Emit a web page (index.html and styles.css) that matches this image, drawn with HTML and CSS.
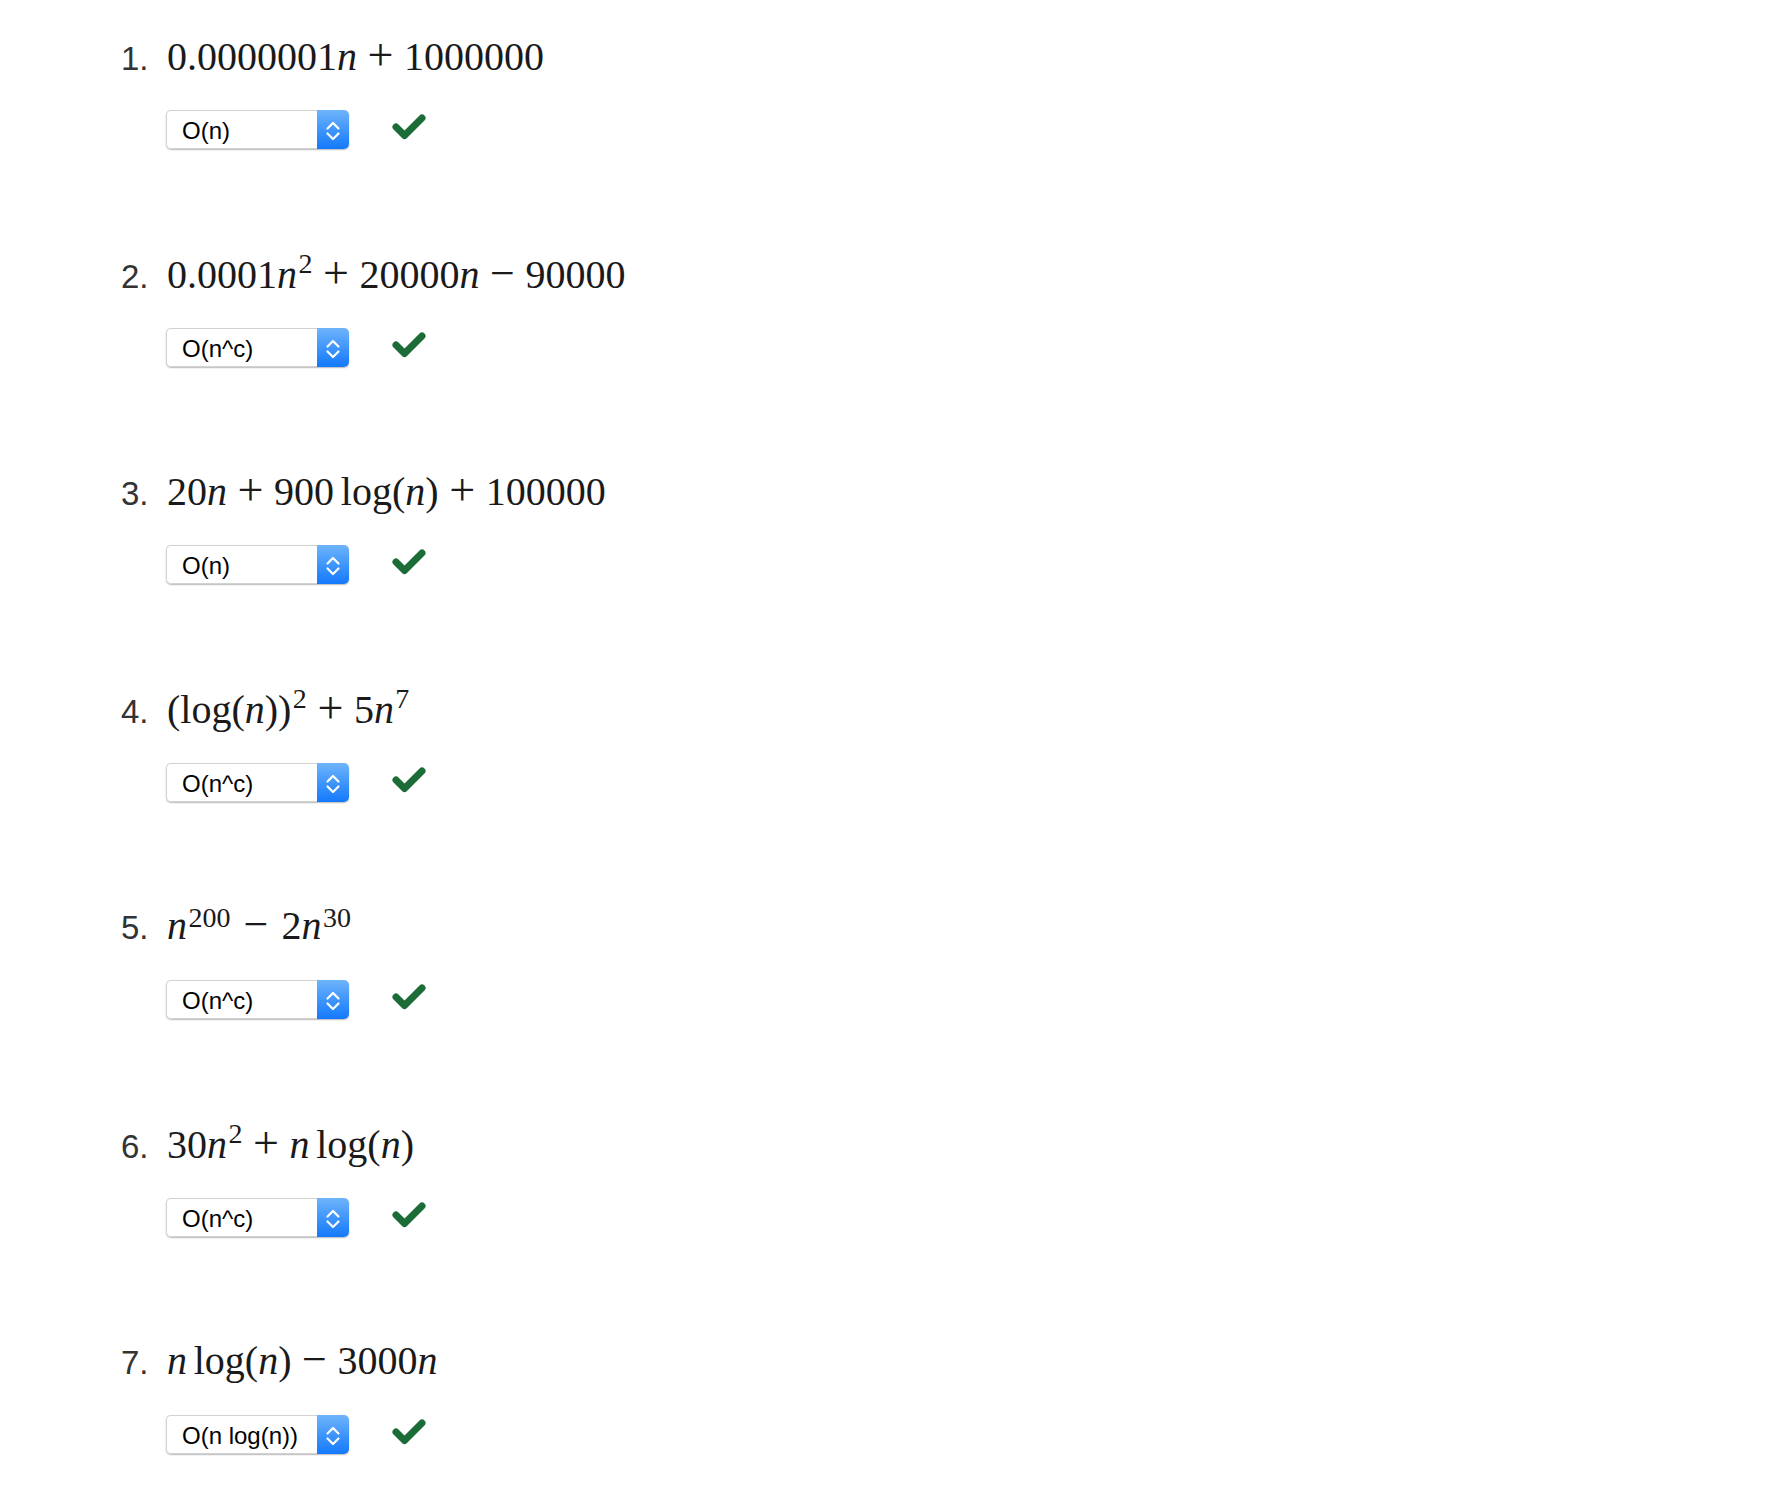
FILE: index.html
```html
<!DOCTYPE html>
<html lang="en">
<head>
<meta charset="utf-8">
<title>Asymptotic complexity quiz</title>
<link rel="stylesheet" href="styles.css">
</head>
<body>
<ol class="quiz">
  <li class="item">
    <div class="head"><span class="num">1.</span><span class="expr">0.0000001<i>n</i><span class="op">+</span>1000000</span></div>
    <div class="answer">
      <div class="select"><span class="value">O(n)</span><span class="arrows"><svg width="32" height="39" viewBox="0 0 32 39"><path d="M10.5 18.5 L16 13 L21.5 18.5 M10.5 23.5 L16 29 L21.5 23.5" fill="none" stroke="#fff" stroke-width="2.2" stroke-linecap="round" stroke-linejoin="round"/></svg></span></div>
      <svg class="check" width="34" height="26" viewBox="0 0 34 26"><path d="M4 13 L12.5 21.5 L30 4" fill="none" stroke="#1c6c38" stroke-width="7" stroke-linecap="round" stroke-linejoin="round"/></svg>
    </div>
  </li>
  <li class="item">
    <div class="head"><span class="num">2.</span><span class="expr">0.0001<i>n</i><sup>2</sup><span class="op">+</span>20000<i>n</i><span class="op minus">−</span>90000</span></div>
    <div class="answer">
      <div class="select"><span class="value">O(n^c)</span><span class="arrows"><svg width="32" height="39" viewBox="0 0 32 39"><path d="M10.5 18.5 L16 13 L21.5 18.5 M10.5 23.5 L16 29 L21.5 23.5" fill="none" stroke="#fff" stroke-width="2.2" stroke-linecap="round" stroke-linejoin="round"/></svg></span></div>
      <svg class="check" width="34" height="26" viewBox="0 0 34 26"><path d="M4 13 L12.5 21.5 L30 4" fill="none" stroke="#1c6c38" stroke-width="7" stroke-linecap="round" stroke-linejoin="round"/></svg>
    </div>
  </li>
  <li class="item">
    <div class="head"><span class="num">3.</span><span class="expr">20<i>n</i><span class="op">+</span>900<span class="fn">log</span>(<i>n</i>)<span class="op">+</span>100000</span></div>
    <div class="answer">
      <div class="select"><span class="value">O(n)</span><span class="arrows"><svg width="32" height="39" viewBox="0 0 32 39"><path d="M10.5 18.5 L16 13 L21.5 18.5 M10.5 23.5 L16 29 L21.5 23.5" fill="none" stroke="#fff" stroke-width="2.2" stroke-linecap="round" stroke-linejoin="round"/></svg></span></div>
      <svg class="check" width="34" height="26" viewBox="0 0 34 26"><path d="M4 13 L12.5 21.5 L30 4" fill="none" stroke="#1c6c38" stroke-width="7" stroke-linecap="round" stroke-linejoin="round"/></svg>
    </div>
  </li>
  <li class="item">
    <div class="head"><span class="num">4.</span><span class="expr">(log(<i>n</i>))<sup>2</sup><span class="op">+</span>5<i>n</i><sup>7</sup></span></div>
    <div class="answer">
      <div class="select"><span class="value">O(n^c)</span><span class="arrows"><svg width="32" height="39" viewBox="0 0 32 39"><path d="M10.5 18.5 L16 13 L21.5 18.5 M10.5 23.5 L16 29 L21.5 23.5" fill="none" stroke="#fff" stroke-width="2.2" stroke-linecap="round" stroke-linejoin="round"/></svg></span></div>
      <svg class="check" width="34" height="26" viewBox="0 0 34 26"><path d="M4 13 L12.5 21.5 L30 4" fill="none" stroke="#1c6c38" stroke-width="7" stroke-linecap="round" stroke-linejoin="round"/></svg>
    </div>
  </li>
  <li class="item">
    <div class="head"><span class="num">5.</span><span class="expr"><i>n</i><sup class="low">200</sup><span class="op minus wide">−</span>2<i>n</i><sup class="low">30</sup></span></div>
    <div class="answer">
      <div class="select"><span class="value">O(n^c)</span><span class="arrows"><svg width="32" height="39" viewBox="0 0 32 39"><path d="M10.5 18.5 L16 13 L21.5 18.5 M10.5 23.5 L16 29 L21.5 23.5" fill="none" stroke="#fff" stroke-width="2.2" stroke-linecap="round" stroke-linejoin="round"/></svg></span></div>
      <svg class="check" width="34" height="26" viewBox="0 0 34 26"><path d="M4 13 L12.5 21.5 L30 4" fill="none" stroke="#1c6c38" stroke-width="7" stroke-linecap="round" stroke-linejoin="round"/></svg>
    </div>
  </li>
  <li class="item">
    <div class="head"><span class="num">6.</span><span class="expr">30<i>n</i><sup>2</sup><span class="op">+</span><i>n</i><span class="fn">log</span>(<i>n</i>)</span></div>
    <div class="answer">
      <div class="select"><span class="value">O(n^c)</span><span class="arrows"><svg width="32" height="39" viewBox="0 0 32 39"><path d="M10.5 18.5 L16 13 L21.5 18.5 M10.5 23.5 L16 29 L21.5 23.5" fill="none" stroke="#fff" stroke-width="2.2" stroke-linecap="round" stroke-linejoin="round"/></svg></span></div>
      <svg class="check" width="34" height="26" viewBox="0 0 34 26"><path d="M4 13 L12.5 21.5 L30 4" fill="none" stroke="#1c6c38" stroke-width="7" stroke-linecap="round" stroke-linejoin="round"/></svg>
    </div>
  </li>
  <li class="item">
    <div class="head"><span class="num">7.</span><span class="expr"><i>n</i><span class="fn">log</span>(<i>n</i>)<span class="op minus">−</span>3000<i>n</i></span></div>
    <div class="answer">
      <div class="select"><span class="value">O(n log(n))</span><span class="arrows"><svg width="32" height="39" viewBox="0 0 32 39"><path d="M10.5 18.5 L16 13 L21.5 18.5 M10.5 23.5 L16 29 L21.5 23.5" fill="none" stroke="#fff" stroke-width="2.2" stroke-linecap="round" stroke-linejoin="round"/></svg></span></div>
      <svg class="check" width="34" height="26" viewBox="0 0 34 26"><path d="M4 13 L12.5 21.5 L30 4" fill="none" stroke="#1c6c38" stroke-width="7" stroke-linecap="round" stroke-linejoin="round"/></svg>
    </div>
  </li>
</ol>
</body>
</html>
```

FILE: styles.css
```css
html, body {
  margin: 0;
  padding: 0;
  background: #ffffff;
}

.quiz {
  list-style: none;
  margin: 0;
  padding: 25px 0 0 121px;
}

.item {
  margin: 0 0 93.5px 0;
}

.head {
  display: flex;
  align-items: baseline;
  height: 60px;
  line-height: 60px;
}

.num {
  width: 46px;
  flex: none;
  font-family: "Liberation Sans", Arial, sans-serif;
  font-size: 33px;
  color: #333333;
}

.expr {
  font-family: "Liberation Serif", "Times New Roman", serif;
  font-size: 40px;
  color: #1a1a1a;
  white-space: nowrap;
}

.expr i {
  font-style: italic;
}

.expr sup {
  font-size: 0.7em;
  line-height: 0;
  vertical-align: 0.53em;
  margin-left: 0.05em;
}

.expr sup.low {
  vertical-align: 0.42em;
}

.op {
  font-size: 1.15em;
  vertical-align: baseline;
  margin: 0 0.23em;
}

.op.minus {
  font-size: 1.1em;
  margin: 0 0.24em;
}

.op.wide {
  margin: 0 0.3em;
}

.fn {
  margin-left: 0.167em;
}

.answer {
  display: flex;
  align-items: flex-start;
  margin: 25px 0 0 45px;
}

.select {
  display: flex;
  width: 183px;
  height: 39px;
  border-radius: 5px;
  box-shadow: 0 1px 1.5px rgba(0, 0, 0, 0.28);
}

.value {
  flex: 1;
  box-sizing: border-box;
  border: 1px solid #d2d2d2;
  border-right: none;
  border-radius: 5px 0 0 5px;
  background: #ffffff;
  padding: 2px 0 0 15px;
  font-family: "Liberation Sans", Arial, sans-serif;
  font-size: 24px;
  line-height: 35px;
  color: #000000;
  white-space: nowrap;
  overflow: hidden;
}

.arrows {
  width: 32px;
  height: 39px;
  flex: none;
  border-radius: 0 5px 5px 0;
  background: linear-gradient(to bottom, #6fb4fb 0%, #3f96fb 50%, #1479fb 100%);
}

.arrows svg {
  display: block;
}

.check {
  display: block;
  margin: 4px 0 0 43px;
}
```
